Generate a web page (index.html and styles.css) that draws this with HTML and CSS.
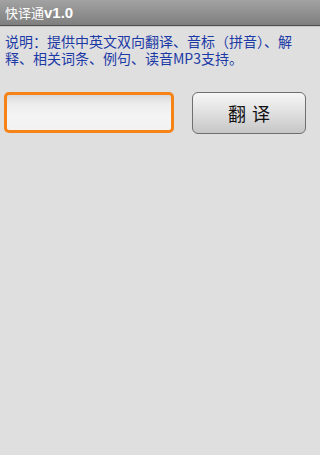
FILE: index.html
```html
<!DOCTYPE html>
<html lang="zh-CN">
<head>
<meta charset="utf-8">
<title>快译通v1.0</title>
<link rel="stylesheet" href="styles.css">
</head>
<body>
<div class="titlebar"><span class="title-cn">快译通</span><span class="title-ver">v1.0</span></div>
<p class="desc">说明：提供中英文双向翻译、音标（拼音）、解释、相关词条、例句、读音MP3支持。</p>
<div class="row">
  <div class="field"></div>
  <div class="btn">翻 译</div>
</div>
</body>
</html>
```

FILE: styles.css
```css
html, body {
  margin: 0;
  padding: 0;
}
body {
  width: 320px;
  height: 455px;
  background: #dfdfdf;
  font-family: "Liberation Sans", "Noto Sans CJK SC", sans-serif;
  overflow: hidden;
}
.titlebar {
  height: 25px;
  background: linear-gradient(#a2a2a2, #7f7f7f);
  border-bottom: 1px solid #4e4e4e;
  box-shadow: 0 1px 0 #c9c9c9;
  color: #ffffff;
  display: flex;
  align-items: center;
  padding-left: 5px;
  box-sizing: content-box;
}
.title-cn {
  font-family: "Noto Sans CJK SC", sans-serif;
  font-size: 13px;
  line-height: 25px;
}
.title-ver {
  font-family: "Liberation Sans", sans-serif;
  font-weight: bold;
  font-size: 15px;
  line-height: 25px;
}
.desc {
  margin: 7px 0 0 5px;
  width: 300px;
  font-family: "Noto Sans CJK SC", sans-serif;
  font-size: 14px;
  line-height: 17px;
  color: #1c3aa6;
}
.row {
  display: flex;
  align-items: flex-start;
  gap: 18px;
  margin-top: 25px;
  padding: 0 4px;
}
.field {
  width: 170px;
  height: 41px;
  box-sizing: border-box;
  border: 3px solid #f68318;
  border-radius: 5px;
  background: linear-gradient(#d9d9d9 0%, #ececec 25%, #f4f4f4 60%, #f2f2f2 100%);
}
.btn {
  width: 114px;
  height: 42px;
  box-sizing: border-box;
  border: 1px solid #6f6f6f;
  border-radius: 6px;
  background: linear-gradient(#f6f6f6, #e2e2e2 45%, #c6c6c6);
  display: flex;
  align-items: center;
  justify-content: center;
  font-family: "Noto Sans CJK SC", sans-serif;
  font-size: 18px;
  color: #111111;
  word-spacing: 2px;
}
```
